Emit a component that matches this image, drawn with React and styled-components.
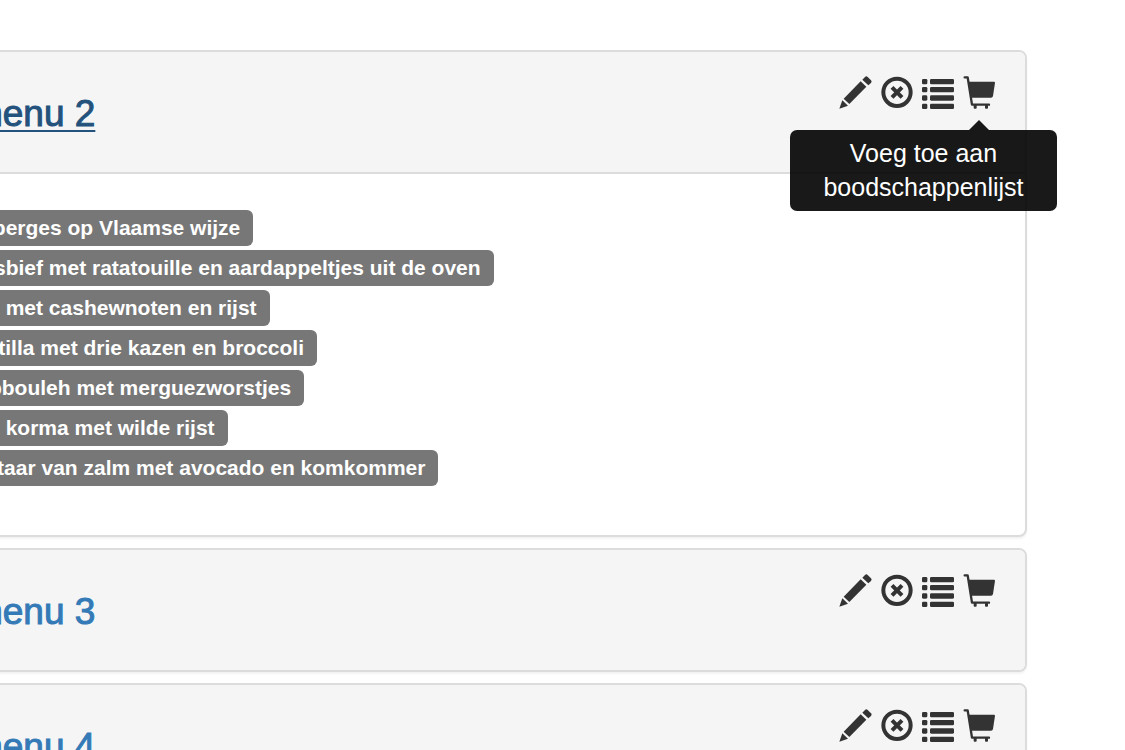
import React from "react";
import styled, { createGlobalStyle } from "styled-components";

const GlobalStyle = createGlobalStyle`
  * { box-sizing: border-box; }
  html { overflow: hidden; }
  body {
    margin: 0;
    background: #fff;
    color: #333;
    font-family: "Liberation Sans", Arial, sans-serif;
    overflow: hidden;
  }
`;

const Page = styled.main`
  display: flex;
  flex-direction: column;
  gap: 11px;
  height: 100vh;
  overflow: hidden;
  padding: 50px 98px 0 0;
`;

const Panel = styled.section`
  flex: none;
  margin-left: -154px;
  border: 2px solid #dcdcdc;
  border-radius: 8px;
  box-shadow: 0 2px 2px rgba(0, 0, 0, 0.05);
  background: #fff;
`;

const PanelHeading = styled.header`
  display: flex;
  justify-content: space-between;
  align-items: flex-start;
  height: 120px;
  padding: 24px 29px 0 30px;
  background: #f5f5f5;
  border-radius: 6px;
`;

const PanelTitle = styled.h4`
  margin: 16px 0 0;
  font-size: 37px;
  line-height: 44px;
  font-weight: 400;
`;

const TitleLink = styled.a`
  color: ${(p) => (p.$active ? "#23527c" : "#337ab7")};
  -webkit-text-stroke: 1px currentColor;
  text-decoration: ${(p) => (p.$active ? "underline" : "none")};
  text-decoration-thickness: 2px;
  text-underline-offset: 4px;
`;

const Actions = styled.div`
  display: flex;
  gap: 7px;
`;

const IconButton = styled.button`
  position: relative;
  width: 34px;
  height: 34px;
  padding: 0;
  border: 0;
  background: none;
  color: #333;
  font-family: inherit;
  cursor: pointer;

  svg {
    display: block;
    width: 34px;
    height: 34px;
    overflow: visible;
  }
`;

const Tooltip = styled.span`
  position: absolute;
  z-index: 2;
  top: 54px;
  right: -61px;
  width: 267px;
  padding: 6px 20px 7px;
  border-radius: 7px;
  background: rgba(0, 0, 0, 0.9);
  color: #fff;
  font-size: 25px;
  line-height: 34px;
  text-align: center;

  &::before {
    content: "";
    position: absolute;
    top: -10px;
    right: 68px;
    border: solid transparent;
    border-width: 0 10px 10px;
    border-bottom-color: rgba(0, 0, 0, 0.9);
  }
`;

const RecipeList = styled.ul`
  display: flex;
  flex-direction: column;
  align-items: flex-start;
  gap: 4px;
  margin: 0;
  padding: 36px 30px 49px 105px;
  border-top: 2px solid #dcdcdc;
  list-style: none;
`;

const Recipe = styled.li`
  padding: 0 13px;
  border-radius: 6px;
  background: #777;
  color: #fff;
  font-size: 21px;
  line-height: 36px;
  font-weight: 700;
  white-space: nowrap;
`;

const Icon = ({ children }) => (
  <svg viewBox="0 0 102 102" fill="currentColor" aria-hidden="true">
    {children}
  </svg>
);

const PencilIcon = () => (
  <Icon>
    <path d="M1 98 10 73 27 89Z" />
    <path d="M14 68 65 16 82 32 31 84Z" />
    <path d="M70 11 78 3Q82-1 86 3L96 13Q100 17 96 21L88 28Z" />
  </Icon>
);

const RemoveIcon = () => (
  <Icon>
    <circle cx="51" cy="49" r="41" fill="none" stroke="currentColor" strokeWidth="12" />
    <path d="M36 34 66 64M66 34 36 64" fill="none" stroke="currentColor" strokeWidth="12" />
  </Icon>
);

const ListIcon = () => (
  <Icon>
    {[9, 33, 58, 83].map((y) => (
      <g key={y}>
        <rect x="3" y={y} width="16" height="16" rx="4" />
        <rect x="27" y={y} width="72" height="16" rx="4" />
      </g>
    ))}
  </Icon>
);

const CartIcon = () => (
  <Icon>
    <path d="M8 4H17L30 86H81" fill="none" stroke="currentColor" strokeWidth="7" strokeLinecap="round" strokeLinejoin="round" />
    <path d="M19 17H96Q99 17 99 20L93 60Q92 65 87 65H28Z" />
    <rect x="35" y="86" width="9" height="12" rx="3" />
    <rect x="69" y="86" width="9" height="12" rx="3" />
  </Icon>
);

const recipes = [
  "Asperges op Vlaamse wijze",
  "Rosbief met ratatouille en aardappeltjes uit de oven",
  "Kip met cashewnoten en rijst",
  "Tortilla met drie kazen en broccoli",
  "Tabbouleh met merguezworstjes",
  "Kip korma met wilde rijst",
  "Tartaar van zalm met avocado en komkommer",
];

const menus = [
  { title: "Weekmenu 2", active: true, recipes },
  { title: "Weekmenu 3" },
  { title: "Weekmenu 4" },
];

function MenuPanel({ menu }) {
  return (
    <Panel>
      <PanelHeading>
        <PanelTitle>
          <TitleLink href="#" $active={menu.active}>{menu.title}</TitleLink>
        </PanelTitle>
        <Actions>
          <IconButton type="button" aria-label="Bewerken"><PencilIcon /></IconButton>
          <IconButton type="button" aria-label="Verwijderen"><RemoveIcon /></IconButton>
          <IconButton type="button" aria-label="Lijst"><ListIcon /></IconButton>
          <IconButton type="button" aria-label="Voeg toe aan boodschappenlijst">
            <CartIcon />
            {menu.active && <Tooltip role="tooltip">Voeg toe aan boodschappenlijst</Tooltip>}
          </IconButton>
        </Actions>
      </PanelHeading>
      {menu.recipes && (
        <RecipeList>
          {menu.recipes.map((name) => <Recipe key={name}>{name}</Recipe>)}
        </RecipeList>
      )}
    </Panel>
  );
}

export default function App() {
  return (
    <>
      <GlobalStyle />
      <Page>
        {menus.map((menu) => <MenuPanel key={menu.title} menu={menu} />)}
      </Page>
    </>
  );
}
